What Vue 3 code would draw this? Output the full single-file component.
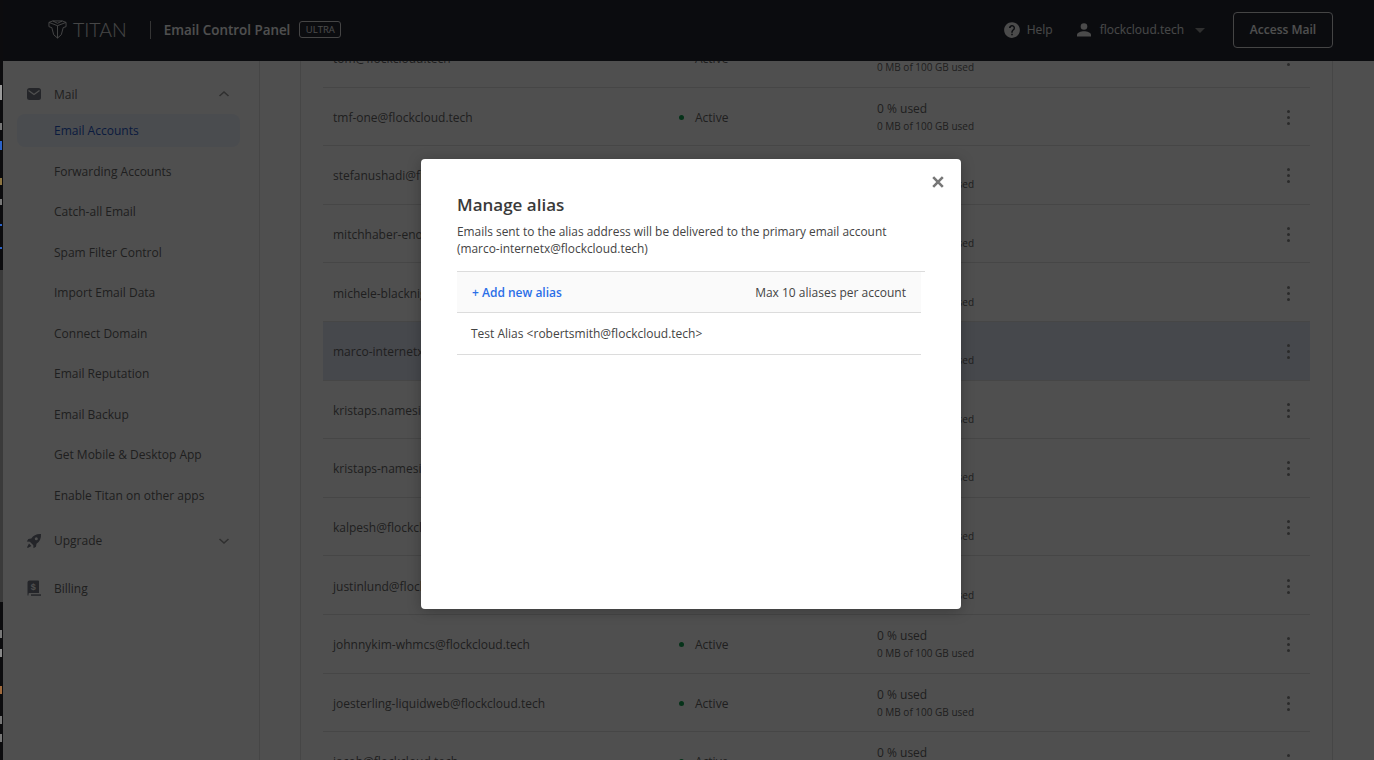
<template>
  <div class="shell">
    <div class="edge">
      <div class="edge-dark top"></div>
      <div class="edge-grey"></div>
      <div class="edge-dark bottom"></div>
      <i
        v-for="bit in edgeBits"
        :key="bit.y"
        class="edge-bit"
        :style="{ top: bit.y + 'px', height: bit.h + 'px', background: bit.c }"
      ></i>
    </div>

    <div class="page">
      <header class="topbar">
        <div class="brand">
          <svg class="logo" width="21" height="19" viewBox="0 0 22 20" fill="none" stroke="#e4e4e4" stroke-width="1">
            <path d="M2 2.500 L6 1 H16 L20 2.500 V7 L17 8 L15 15.500 L11 19 L7 15.500 L5 8 L2 7 Z" />
            <path d="M2 2.500 L11 6 L20 2.500 M11 6 V19 M6 1 L11 3.500 L16 1" />
          </svg>
          <span class="wordmark">TITAN</span>
          <span class="sep"></span>
          <span class="panel-name">Email Control Panel</span>
          <span class="plan">ULTRA</span>
        </div>
        <div class="top-actions">
          <svg class="help-icon" width="18" height="18" viewBox="0 0 24 24">
            <path fill="#f0f0f0" d="M12 1.500C6.200 1.500 1.500 6.200 1.500 12S6.200 22.500 12 22.500 22.500 17.800 22.500 12 17.800 1.500 12 1.500zm1 17.500h-2v-2h2v2zm2.300-7.500l-.9.900c-.8.800-1.400 1.500-1.400 3.100h-2v-.5c0-1.100.5-2.100 1.300-2.900l1.300-1.300c.4-.4.600-.9.600-1.400 0-1.100-.9-2-2-2s-2 .9-2 2H8c0-2.200 1.800-4 4-4s4 1.800 4 4c0 .9-.4 1.700-.7 2.100z" />
          </svg>
          <span class="help-label">Help</span>
          <svg class="user-icon" width="16" height="16" viewBox="0 0 16 16">
            <circle cx="8" cy="4.500" r="3.300" fill="#f0f0f0" />
            <path fill="#f0f0f0" d="M1 14.500v-1.700C1 10.500 5 9.300 8 9.300s7 1.200 7 3.500v1.700z" />
          </svg>
          <span class="domain">flockcloud.tech</span>
          <span class="caret"></span>
          <button class="access">Access Mail</button>
        </div>
      </header>

      <div class="body">
        <aside class="sidebar">
          <div class="nav-head">
            <svg width="16" height="14" viewBox="0 0 16 14">
              <rect x="1" y="1" width="14" height="12" rx="2.500" fill="#747884" />
              <path d="M2.500 3.500 L8 7.500 L13.500 3.500" fill="none" stroke="#fff" stroke-width="1.300" />
            </svg>
            <span>Mail</span>
            <svg class="chev" width="12" height="8" viewBox="0 0 12 8"><path d="M1.500 6 L6 2 L10.500 6" fill="none" stroke="#999" stroke-width="1.600" /></svg>
          </div>
          <ul class="subnav">
            <li v-for="(item, i) in mailLinks" :key="item" :class="{ current: i === 0 }">{{ item }}</li>
          </ul>
          <div class="nav-head upgrade">
            <svg width="16" height="16" viewBox="0 0 16 16">
              <path fill="#747884" d="M15 1c-4.500-.3-7.500 1.200-9.700 4.500L2.300 6 .8 8.500l3 .2 3.500 3.500.2 3 2.500-1.500.5-3C13.800 8.500 15.300 5.500 15 1z" />
              <circle cx="10.300" cy="5.700" r="1.500" fill="#fff" />
              <path fill="#747884" d="M3 10.500l2.500 2.500-3.700 2-.8-.8z" />
            </svg>
            <span>Upgrade</span>
            <svg class="chev" width="12" height="8" viewBox="0 0 12 8"><path d="M1.500 2 L6 6 L10.500 2" fill="none" stroke="#999" stroke-width="1.600" /></svg>
          </div>
          <div class="nav-head billing">
            <svg width="16" height="17" viewBox="0 0 16 17">
              <path fill="#747884" d="M3.500 .5h8.500c.6 0 1 .4 1 1V13H3.500C3 13 2.500 13.500 2.500 14v1.500H1.500V2.500c0-1.100.9-2 2-2z" />
              <rect x="5" y="14.300" width="10" height="1.500" fill="#747884" />
              <text x="7.300" y="10" font-size="9" font-weight="700" fill="#fff" text-anchor="middle" font-family="Liberation Sans, sans-serif">$</text>
            </svg>
            <span>Billing</span>
          </div>
        </aside>

        <main class="main">
          <section class="card">
            <div class="rows">
              <div v-for="row in accounts" :key="row" class="row" :class="{ picked: row.startsWith('marco') }">
                <div class="addr">{{ row }}</div>
                <div class="status"><i class="dot"></i>Active</div>
                <div class="usage">
                  <div class="pct">0 % used</div>
                  <div class="quota">0 MB of 100 GB used</div>
                </div>
                <div class="more"><i></i><i></i><i></i></div>
              </div>
            </div>
          </section>
        </main>
      </div>
    </div>

    <div class="backdrop">
      <div class="modal">
        <button class="close" aria-label="Close">
          <svg width="12" height="12" viewBox="0 0 12 12"><path d="M1.200 1.200 L10.800 10.800 M10.800 1.200 L1.200 10.800" stroke="#777" stroke-width="2.600" /></svg>
        </button>
        <h2>Manage alias</h2>
        <p>Emails sent to the alias address will be delivered to the primary email account (marco-internetx@flockcloud.tech)</p>
        <div class="alias-table">
          <div class="alias-head">
            <a class="add">+ Add new alias</a>
            <span>Max 10 aliases per account</span>
          </div>
          <div class="alias-row">Test Alias &lt;robertsmith@flockcloud.tech&gt;</div>
        </div>
      </div>
    </div>
  </div>
</template>

<script setup>
const mailLinks = [
  'Email Accounts',
  'Forwarding Accounts',
  'Catch-all Email',
  'Spam Filter Control',
  'Import Email Data',
  'Connect Domain',
  'Email Reputation',
  'Email Backup',
  'Get Mobile & Desktop App',
  'Enable Titan on other apps'
]

const accounts = [
  'tom@flockcloud.tech',
  'tmf-one@flockcloud.tech',
  'stefanushadi@flockcloud.tech',
  'mitchhaber-enom@flockcloud.tech',
  'michele-blacknight@flockcloud.tech',
  'marco-internetx@flockcloud.tech',
  'kristaps.namesilo@flockcloud.tech',
  'kristaps-namesilo@flockcloud.tech',
  'kalpesh@flockcloud.tech',
  'justinlund@flockcloud.tech',
  'johnnykim-whmcs@flockcloud.tech',
  'joesterling-liquidweb@flockcloud.tech',
  'jacob@flockcloud.tech'
]

// slivers of whatever window sits behind this one
const edgeBits = [
  { y: 85, h: 15, c: '#9a9a9a' },
  { y: 123, h: 7, c: '#777' },
  { y: 141, h: 9, c: '#2a62c8' },
  { y: 178, h: 7, c: '#8c7440' },
  { y: 199, h: 6, c: '#777' },
  { y: 224, h: 2, c: '#2a62c8' },
  { y: 247, h: 2, c: '#2a62c8' },
  { y: 630, h: 8, c: '#777' },
  { y: 649, h: 8, c: '#888' },
  { y: 686, h: 8, c: '#a06a3c' },
  { y: 716, h: 8, c: '#777' },
  { y: 734, h: 8, c: '#777' }
]
</script>

<style>
html,
body {
  margin: 0;
  overflow: hidden;
}
</style>

<style scoped>
.shell {
  display: flex;
  height: 100vh;
  position: relative;
  overflow: hidden;
  font-family: "Open Sans", "Noto Sans", sans-serif;
  background: #fff;
}

.edge {
  position: relative;
  z-index: 5;
  flex: 0 0 3px;
  display: flex;
  flex-direction: column;
}
.edge-dark.top { height: 270px; background: #0c0c0e; }
.edge-grey { height: 332px; background: #3a3a3a; }
.edge-dark.bottom { flex: 1; background: #0c0c0e; }
.edge-bit {
  position: absolute;
  left: 0;
  width: 2px;
}

.page {
  flex: 1;
  min-width: 0;
  display: flex;
  flex-direction: column;
}

.topbar {
  flex: 0 0 61px;
  position: relative;
  z-index: 2;
  display: flex;
  align-items: center;
  justify-content: space-between;
  box-sizing: border-box;
  padding: 0 41px 2px 44px;
  background: #242833;
  color: #fff;
}
.brand {
  display: flex;
  align-items: center;
}
.logo {
  margin-right: 5px;
}
.wordmark {
  font-family: Lato, sans-serif;
  font-weight: 300;
  font-size: 19.500px;
  color: #e0e0e0;
}
.sep {
  width: 1px;
  height: 18px;
  margin: 0 13px 0 23px;
  background: #aaa;
}
.panel-name {
  font-size: 13.400px;
  font-weight: 600;
  color: #fff;
}
.plan {
  margin-left: 9px;
  padding: 0 5.500px;
  height: 17px;
  line-height: 15px;
  box-sizing: border-box;
  border: 1px solid #ddd;
  border-radius: 3px;
  font-size: 9.500px;
  color: #eee;
}
.top-actions {
  display: flex;
  align-items: center;
  font-size: 12px;
  color: #e8e8e8;
}
.help-label { margin-left: 6px; }
.user-icon { margin-left: 23px; }
.domain { margin-left: 8px; }
.caret {
  margin: 2px 0 0 11px;
  border: 5px solid transparent;
  border-top-color: #999;
  border-bottom: 0;
}
.access {
  margin-left: 28px;
  width: 100px;
  height: 36px;
  background: transparent;
  border: 1px solid #ddd;
  border-radius: 4px;
  font: 600 12px "Open Sans", sans-serif;
  color: #fff;
}

.body {
  flex: 1;
  min-height: 0;
  display: flex;
}

.sidebar {
  flex: 0 0 257px;
  box-sizing: border-box;
  padding: 20px 19px 0 14px;
  border-right: 1px solid #e2e2e2;
  font-size: 12px;
  color: #666;
}
.nav-head {
  display: flex;
  align-items: center;
  height: 26px;
  padding-left: 9px;
}
.nav-head > span {
  margin-left: 12px;
}
.chev {
  margin-left: auto;
  margin-right: 10px;
}
.upgrade { margin-top: 16px; }
.billing { margin-top: 22px; }
.subnav {
  list-style: none;
  margin: 0;
  padding: 0;
}
.subnav li {
  height: 33px;
  margin-top: 7.500px;
  line-height: 33px;
  padding-left: 37px;
  border-radius: 8px;
}
.subnav li:first-child { margin-top: 7px; }
.subnav .current {
  background: #eff4ff;
  color: #2559c9;
}

.main {
  flex: 1;
  min-width: 0;
  padding: 0 41px 0 40px;
}
.card {
  height: 100%;
  overflow: hidden;
  padding: 0 22px;
  border: solid #e2e2e2;
  border-width: 0 1px;
}
.rows {
  margin-top: -32px;
}
.row {
  display: flex;
  align-items: center;
  height: 58.600px;
  box-sizing: border-box;
  padding: 2px 0 0 10px;
  border-bottom: 1px solid #e2e2e2;
  font-size: 12px;
  color: #666;
}
.row.picked { background: #e3e8f6; }
.addr { flex: 0 0 346px; }
.status {
  flex: 0 0 198px;
  display: flex;
  align-items: center;
}
.dot {
  width: 5px;
  height: 5px;
  margin-right: 11px;
  border-radius: 50%;
  background: #12a150;
}
.pct { line-height: 17px; }
.quota { font-size: 10px; line-height: 18px; }
.usage { flex: 1; }
.more {
  display: flex;
  flex-direction: column;
  gap: 3px;
  margin-right: 20px;
}
.more i {
  width: 3px;
  height: 3px;
  border-radius: 50%;
  background: #888;
}

.backdrop {
  position: absolute;
  inset: 0 0 0 3px;
  z-index: 3;
  display: flex;
  align-items: flex-start;
  justify-content: center;
  padding: 159px 0 0 5px;
  box-sizing: border-box;
  background: rgba(0, 0, 0, .69);
}
.modal {
  position: relative;
  width: 540px;
  height: 450px;
  box-sizing: border-box;
  padding: 34px 36px 0;
  border-radius: 4px;
  background: #fff;
  box-shadow: 0 2px 14px rgba(0, 0, 0, .25);
}
.close {
  position: absolute;
  top: 17px;
  right: 17px;
  padding: 0;
  border: 0;
  background: none;
  line-height: 0;
}
.modal h2 {
  margin: 0;
  font-size: 17px;
  line-height: 23px;
  font-weight: 600;
  color: #3a3a3a;
}
.modal p {
  margin: 7px 0 0;
  font-size: 11.900px;
  line-height: 17px;
  color: #444;
}
.alias-table {
  margin-top: 14px;
  border-top: 1px solid #dcdcdc;
  font-size: 12px;
  color: #444;
}
.alias-head {
  display: flex;
  align-items: center;
  justify-content: space-between;
  height: 41px;
  margin-right: 4px;
  padding: 0 15px;
  box-sizing: border-box;
  background: #fafafa;
  border-bottom: 1px solid #dcdcdc;
}
.add {
  font-weight: 600;
  color: #2b6fe8;
}
.alias-row {
  height: 42px;
  line-height: 41px;
  margin-right: 4px;
  padding-left: 14px;
  box-sizing: border-box;
  border-bottom: 1px solid #dcdcdc;
}
</style>
